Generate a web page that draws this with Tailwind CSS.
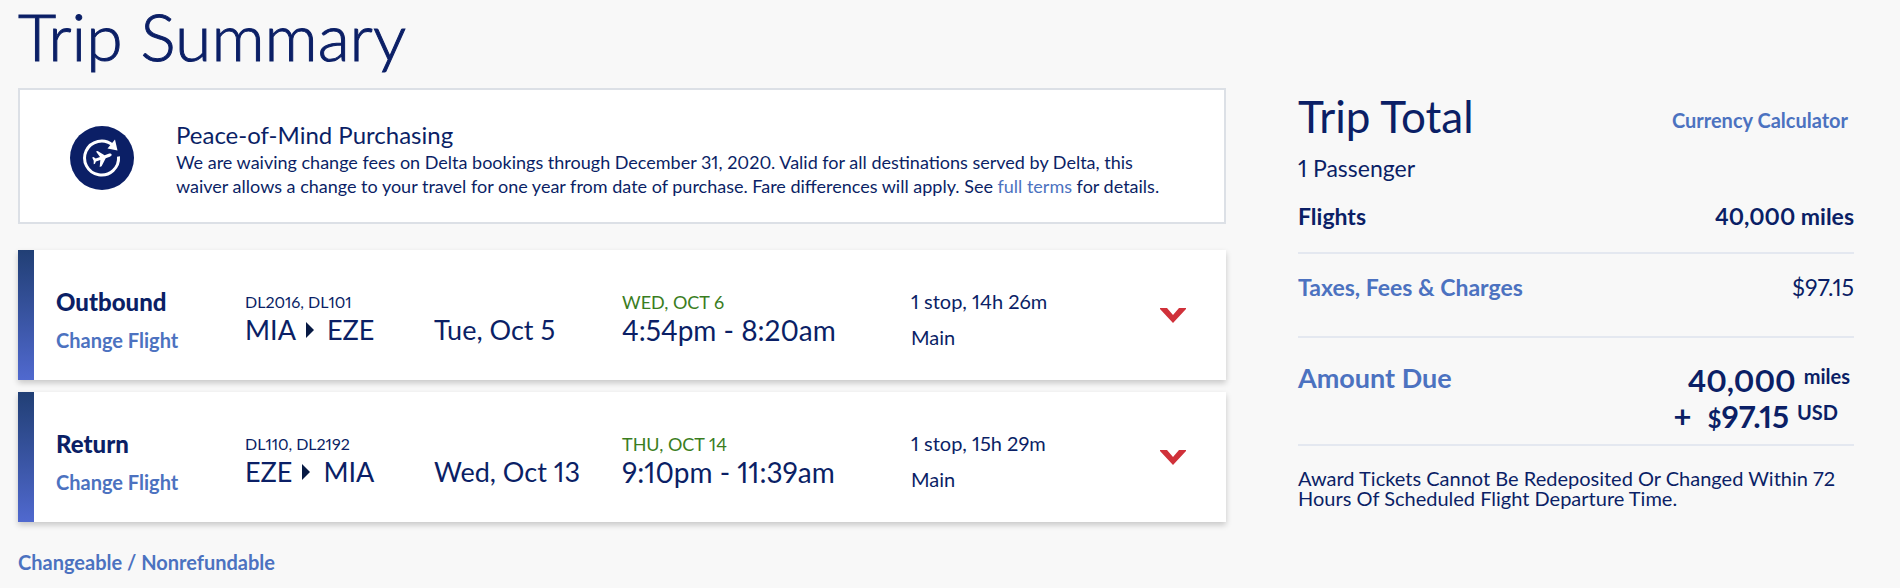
<!DOCTYPE html>
<html lang="en">
<head>
  <meta charset="UTF-8" />
  <meta name="viewport" content="width=device-width, initial-scale=1.0"/>
  <title>Trip Summary</title>
  <script src="https://cdn.jsdelivr.net/npm/@tailwindcss/browser@4"></script>
</head>
<body class="bg-[#f8f8f8] font-[Lato,sans-serif] proportional-nums text-[#0b1f66]">
  <div class="pl-[18px] pr-[46px]">
    <h1 class="text-[66px] leading-[72px] font-light mb-4 [-webkit-text-stroke:1px]">Trip Summary</h1>

    <div class="grid grid-cols-[1208fr_556fr] gap-x-[72px] items-start">
      <main>
        <!-- Waiver notice -->
        <section class="flex items-start bg-white border-2 border-[#dce0e6] pt-[30px] pb-6 pl-[50px] pr-10">
          <svg class="w-16 h-16 mt-[6px] mr-[42px] shrink-0" viewBox="0 0 64 64" fill="none" aria-hidden="true">
            <circle cx="32" cy="32" r="32" fill="#0b1f66"/>
            <path d="M48.5 30.5A17 17 0 1 1 42.5 19" stroke="#fff" stroke-width="3"/>
            <path d="M45 13.5 47.5 24.5 37.5 22.5Z" fill="#fff"/>
            <path d="M41.6 28.4c-.4-1.2-1.8-1.2-3-.7l-4 1.6-7-4.4-1.6.6 4 5.4-4.3 1.7-2.2-1.6-1.3.5 1.5 3.2 0 3.5 1.3-.5.9-2.3 4.4-1.5-.6 7 1.9-.7 4.1-7.9 4.1-1.6c1.200-.5 2.100-1.300 1.800-2.300z" fill="#fff"/>
          </svg>
          <div>
            <h2 class="text-2xl leading-[30px]">Peace-of-Mind Purchasing</h2>
            <p class="text-lg leading-6">We are waiving change fees on Delta bookings through December 31, 2020. Valid for all destinations served by Delta, this waiver allows a change to your travel for one year from date of purchase. Fare differences will apply. See <a href="#" class="text-[#4c72c0]">full terms</a> for details.</p>
          </div>
        </section>

        <!-- Outbound -->
        <section class="mt-[26px] flex h-[130px] bg-white shadow-[0_3px_6px_rgba(0,0,0,0.2)]">
          <div class="w-4 shrink-0 bg-linear-to-b from-[#213f75] to-[#5069cf]"></div>
          <div class="flex-1 pt-[1px] pl-[22px] pr-10 grid grid-cols-[189fr_189fr_188fr_289fr_249fr_26px]">
            <div class="pt-[37px]">
              <h3 class="text-2xl leading-7 font-black">Outbound</h3>
              <a href="#" class="block mt-3 text-xl leading-6 font-bold text-[#4c72c0]">Change Flight</a>
            </div>
            <div class="pt-[39px]">
              <p class="text-base leading-6">DL2016, DL101</p>
              <p class="text-[27px] leading-8 flex items-center">MIA
                <svg class="w-2 h-4 ml-[10px] mr-[13px]" viewBox="0 0 8 16" aria-hidden="true"><path d="M0 0 8 8 0 16z" fill="#071a44"/></svg>EZE</p>
            </div>
            <p class="pt-[63px] text-[27px] leading-8">Tue, Oct 5</p>
            <div class="pt-[39px]">
              <p class="text-lg leading-6 text-[#3a7d1e]">WED, OCT 6</p>
              <p class="text-[28px] leading-8">4:54pm - 8:20am</p>
            </div>
            <div class="pt-8 text-[20px] leading-9">
              <p>1 stop, 14h 26m</p>
              <p>Main</p>
            </div>
            <button type="button" aria-label="Show outbound details" class="self-center">
              <svg class="w-[26px] h-[15px]" viewBox="0 0 26 15"><path d="M0 0h7l6 7 6-7h7v1L13 15 0 1z" fill="#d0313a"/></svg>
            </button>
          </div>
        </section>

        <!-- Return -->
        <section class="mt-3 flex h-[130px] bg-white shadow-[0_3px_6px_rgba(0,0,0,0.2)]">
          <div class="w-4 shrink-0 bg-linear-to-b from-[#213f75] to-[#5069cf]"></div>
          <div class="flex-1 pt-[1px] pl-[22px] pr-10 grid grid-cols-[189fr_189fr_188fr_289fr_249fr_26px]">
            <div class="pt-[37px]">
              <h3 class="text-2xl leading-7 font-black">Return</h3>
              <a href="#" class="block mt-3 text-xl leading-6 font-bold text-[#4c72c0]">Change Flight</a>
            </div>
            <div class="pt-[39px]">
              <p class="text-base leading-6">DL110, DL2192</p>
              <p class="text-[27px] leading-8 flex items-center">EZE
                <svg class="w-2 h-4 ml-[10px] mr-[13px]" viewBox="0 0 8 16" aria-hidden="true"><path d="M0 0 8 8 0 16z" fill="#071a44"/></svg>MIA</p>
            </div>
            <p class="pt-[63px] text-[27px] leading-8">Wed, Oct 13</p>
            <div class="pt-[39px]">
              <p class="text-lg leading-6 text-[#3a7d1e]">THU, OCT 14</p>
              <p class="text-[28px] leading-8">9:10pm - 11:39am</p>
            </div>
            <div class="pt-8 text-[20px] leading-9">
              <p>1 stop, 15h 29m</p>
              <p>Main</p>
            </div>
            <button type="button" aria-label="Show return details" class="self-center">
              <svg class="w-[26px] h-[15px]" viewBox="0 0 26 15"><path d="M0 0h7l6 7 6-7h7v1L13 15 0 1z" fill="#d0313a"/></svg>
            </button>
          </div>
        </section>

        <a href="#" class="inline-block mt-7 text-xl leading-6 font-bold text-[#4c72c0]">Changeable / Nonrefundable</a>
      </main>

      <!-- Totals -->
      <aside>
        <div class="flex justify-between items-center pr-[6px]">
          <h2 class="text-[44px] leading-[56px]">Trip Total</h2>
          <a href="#" class="mt-2 text-xl leading-6 font-bold text-[#4c72c0]">Currency Calculator</a>
        </div>
        <p class="mt-[10px] text-[23px] leading-7">1 Passenger</p>
        <div class="mt-5 pb-[22px] flex justify-between text-[23px] leading-7 font-bold border-b-2 border-[#e4e8f0]">
          <span>Flights</span>
          <span>40,000 miles</span>
        </div>
        <div class="pt-[19px] pb-[35px] flex justify-between text-[23px] leading-7 border-b-2 border-[#e4e8f0]">
          <a href="#" class="font-bold text-[#4c72c0]">Taxes, Fees &amp; Charges</a>
          <span>$97.15</span>
        </div>
        <div class="pt-6 pb-[10px] flex justify-between items-start border-b-2 border-[#e4e8f0]">
          <a href="#" class="text-[27px] leading-8 font-bold text-[#4c72c0]">Amount Due</a>
          <div class="text-[31px] leading-9 font-bold">
            <p class="flex justify-end gap-2 pr-1">40,000 <span class="text-xl leading-7">miles</span></p>
            <p class="flex justify-end pr-4"><span class="mr-4">+</span><span><span class="text-2xl leading-none">$</span>97.15</span> <span class="ml-2 text-xl leading-7">USD</span></p>
          </div>
        </div>
        <p class="mt-[22px] text-xl leading-5">Award Tickets Cannot Be Redeposited Or Changed Within 72 Hours Of Scheduled Flight Departure Time.</p>
      </aside>
    </div>
  </div>
</body>
</html>
